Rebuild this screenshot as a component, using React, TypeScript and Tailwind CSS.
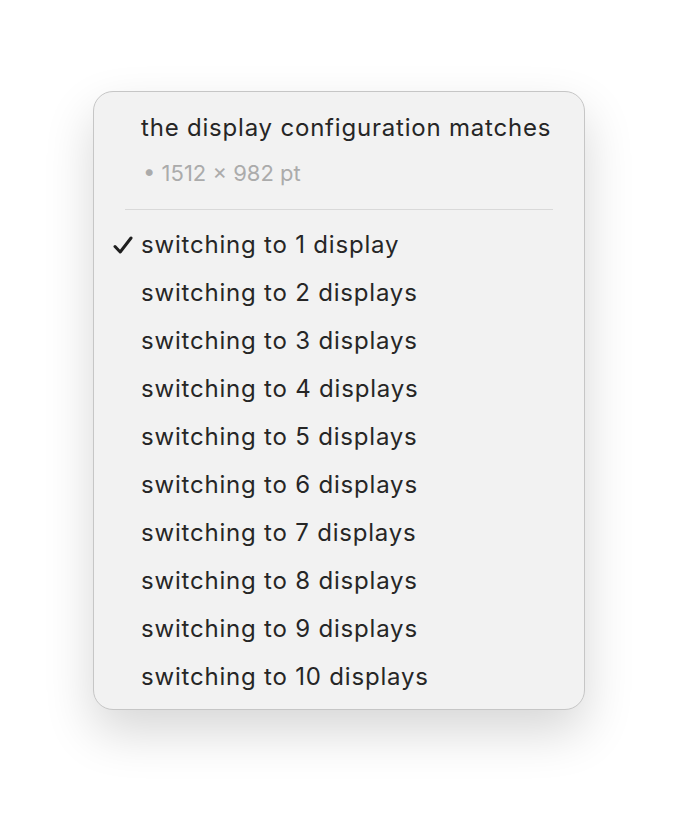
import React from "react";

const items = Array.from({ length: 10 }, (_, i) =>
  i === 0 ? "switching to 1 display" : `switching to ${i + 1} displays`
);

function Check() {
  return (
    <svg width="20" height="18" viewBox="0 0 20 18" className="block">
      <path d="M2 10.5 L7.2 16 L18 2" fill="none" stroke="#1f1f1f" strokeWidth="3" strokeLinecap="round" strokeLinejoin="round" />
    </svg>
  );
}

export default function App() {
  return (
    <div className="min-h-[818px] w-full bg-white pt-[91px] pl-[93px]" style={{ fontFamily: "Inter, 'Liberation Sans', sans-serif" }}>
      <div className="w-[492px] rounded-[20px] border border-[#c6c6c6] bg-[#f2f2f2] pt-[12px] pb-[8px] shadow-[0_22px_50px_rgba(0,0,0,0.16)]">
        <div className="flex h-[48px] items-center pl-[47px] text-[24px] tracking-[0.8px] text-[#262626]">
          the display configuration matches
        </div>
        <div className="flex h-[42px] items-center pl-[49px] text-[22px] text-[#ababab]">
          • 1512 × 982 pt
        </div>
        <div className="mx-[31px] mt-[15px] mb-[11px] h-px bg-[#d9d9d9]" />
        {items.map((t, i) => (
          <div key={t} className="relative flex h-[48px] items-center pl-[47px] text-[24px] tracking-[0.8px] text-[#262626]">
            {i === 0 && (
              <span className="absolute left-[19px] top-[15px]">
                <Check />
              </span>
            )}
            {t}
          </div>
        ))}
      </div>
    </div>
  );
}
